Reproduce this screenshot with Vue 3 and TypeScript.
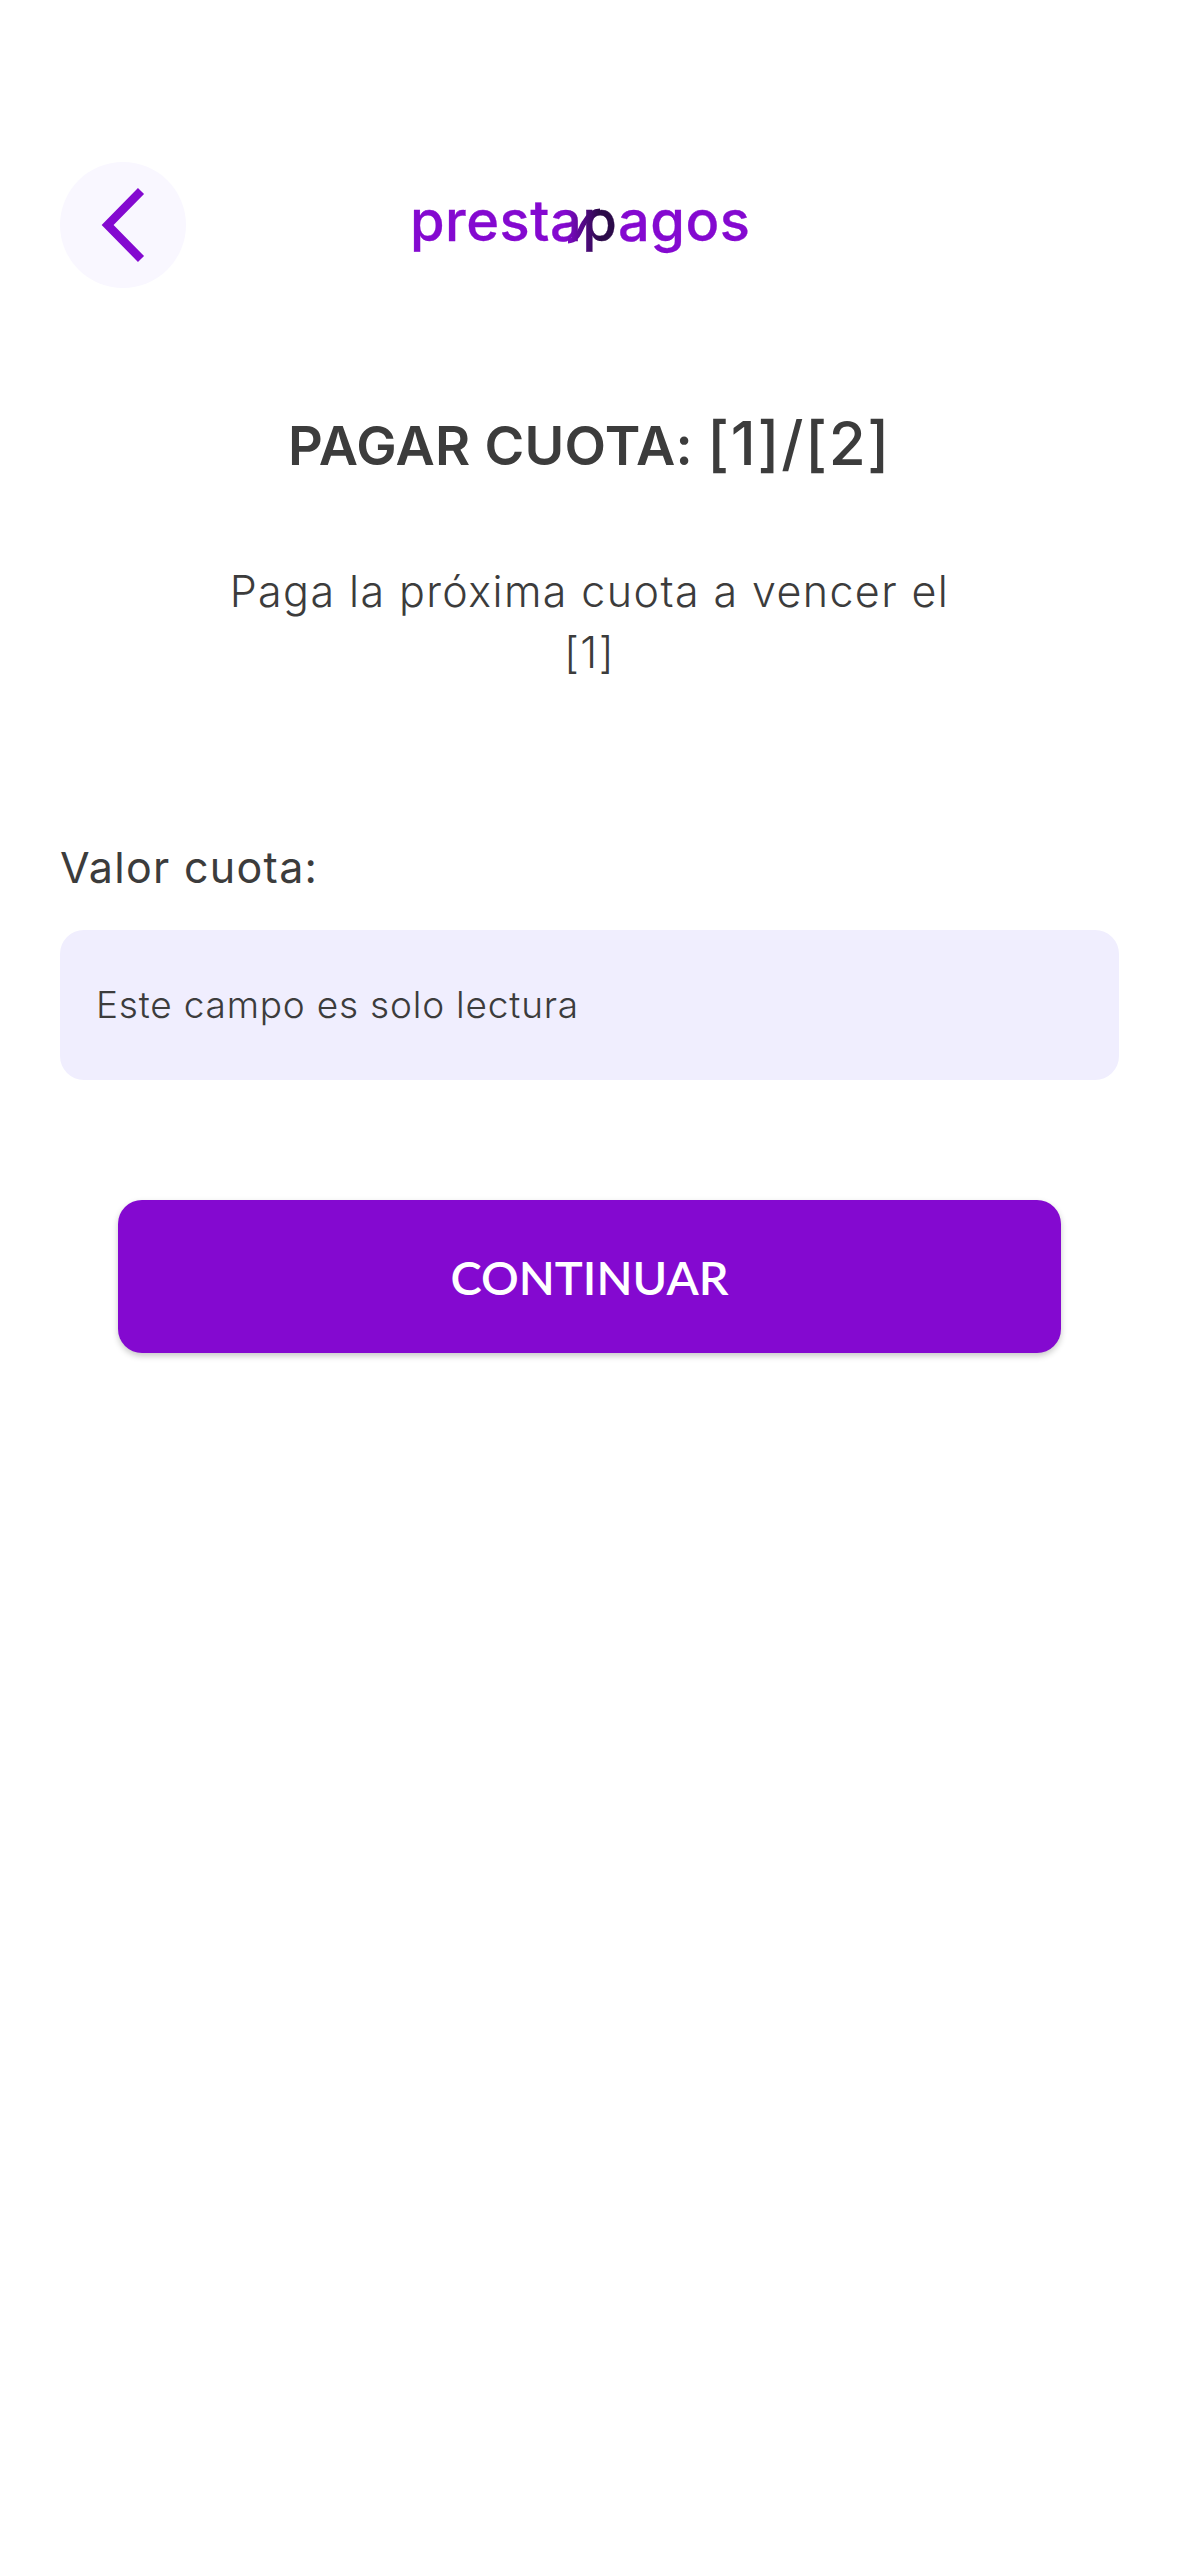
<script setup lang="ts">
const title = "PAGAR CUOTA:";
const placeholders = "[1]/[2]";
</script>

<template>
  <main class="page">
    <header class="top">
      <button class="back" type="button" aria-label="Volver">
        <svg width="126" height="126" viewBox="0 0 126 126">
          <path d="M81 29 L47.6 63 L81 97" fill="none" stroke="#8409d0" stroke-width="8.5" />
        </svg>
      </button>
      <svg class="logo" width="344" height="84" viewBox="0 0 344 84" role="img" aria-label="prestapagos">
        <defs>
          <linearGradient id="logoFill" gradientUnits="userSpaceOnUse" x1="0" y1="0" x2="344" y2="0">
            <stop offset="0.45" stop-color="#8409d0" />
            <stop offset="0.55" stop-color="#2c0a4a" />
            <stop offset="0.595" stop-color="#2c0a4a" />
            <stop offset="0.6" stop-color="#8409d0" />
          </linearGradient>
        </defs>
        <text x="0" y="60" class="logo-text" textLength="340" lengthAdjust="spacing" fill="url(#logoFill)" stroke="url(#logoFill)" stroke-width="0.3">prestapagos</text>
        <path d="M158 60 C168 60 170 48 174 42 C178 35 183 30 190 30" fill="none" stroke="url(#logoFill)" stroke-width="5" />
      </svg>
    </header>

    <h1 class="title">{{ title }} <span class="vars">{{ placeholders }}</span></h1>
    <p class="lead">Paga la próxima cuota a vencer el<br />[1]</p>

    <label class="label">Valor cuota:</label>
    <div class="field">Este campo es solo lectura</div>

    <button class="cta" type="button">CONTINUAR</button>
  </main>
</template>

<style>
html,
body {
  margin: 0;
  background: #fff;
}
</style>

<style scoped>
.page {
  box-sizing: border-box;
  width: 1179px;
  height: 2556px;
  padding: 162px 60px 0;
  font-family: Inter, "Noto Sans", sans-serif;
  color: #3c3c3c;
  display: flex;
  flex-direction: column;
}

.top {
  display: flex;
  align-items: flex-start;
  gap: 224px;
  height: 126px;
}

.back {
  width: 126px;
  height: 126px;
  padding: 0;
  border: 0;
  border-radius: 50%;
  background: #f9f7ff;
  display: block;
  flex: none;
}

.back svg {
  display: block;
}

.logo {
  margin-top: 19px;
  display: block;
}

.logo-text {
  font-family: Inter, sans-serif;
  font-size: 56px;
  font-weight: 500;
}

.title {
  margin: 120px 0 0;
  text-align: center;
  font-size: 54px;
  line-height: 76px;
  font-weight: 600;
  letter-spacing: 0.3px;
}

.vars {
  font-size: 60px;
  line-height: 60px;
  font-weight: 500;
  letter-spacing: 1.6px;
}

.lead {
  margin: 77px 0 0;
  text-align: center;
  font-size: 43px;
  line-height: 61px;
  font-weight: 300;
  letter-spacing: 1.4px;
}

.label {
  display: block;
  margin-top: 154px;
  font-size: 43px;
  line-height: 60px;
  font-weight: 400;
  letter-spacing: 1.3px;
}

.field {
  margin-top: 33px;
  height: 150px;
  box-sizing: border-box;
  padding: 0 0 2px 36px;
  border-radius: 24px;
  background: #f0eefe;
  display: flex;
  align-items: center;
  font-size: 37px;
  font-weight: 300;
  letter-spacing: 0.8px;
}

.cta {
  margin: 120px 58px 0;
  height: 153px;
  border: 0;
  border-radius: 24px;
  background: #8409d0;
  color: #fff;
  font-family: Lato, sans-serif;
  font-size: 47px;
  font-weight: 600;
  box-shadow: 0 3px 6px rgba(0, 0, 0, 0.22);
}
</style>
